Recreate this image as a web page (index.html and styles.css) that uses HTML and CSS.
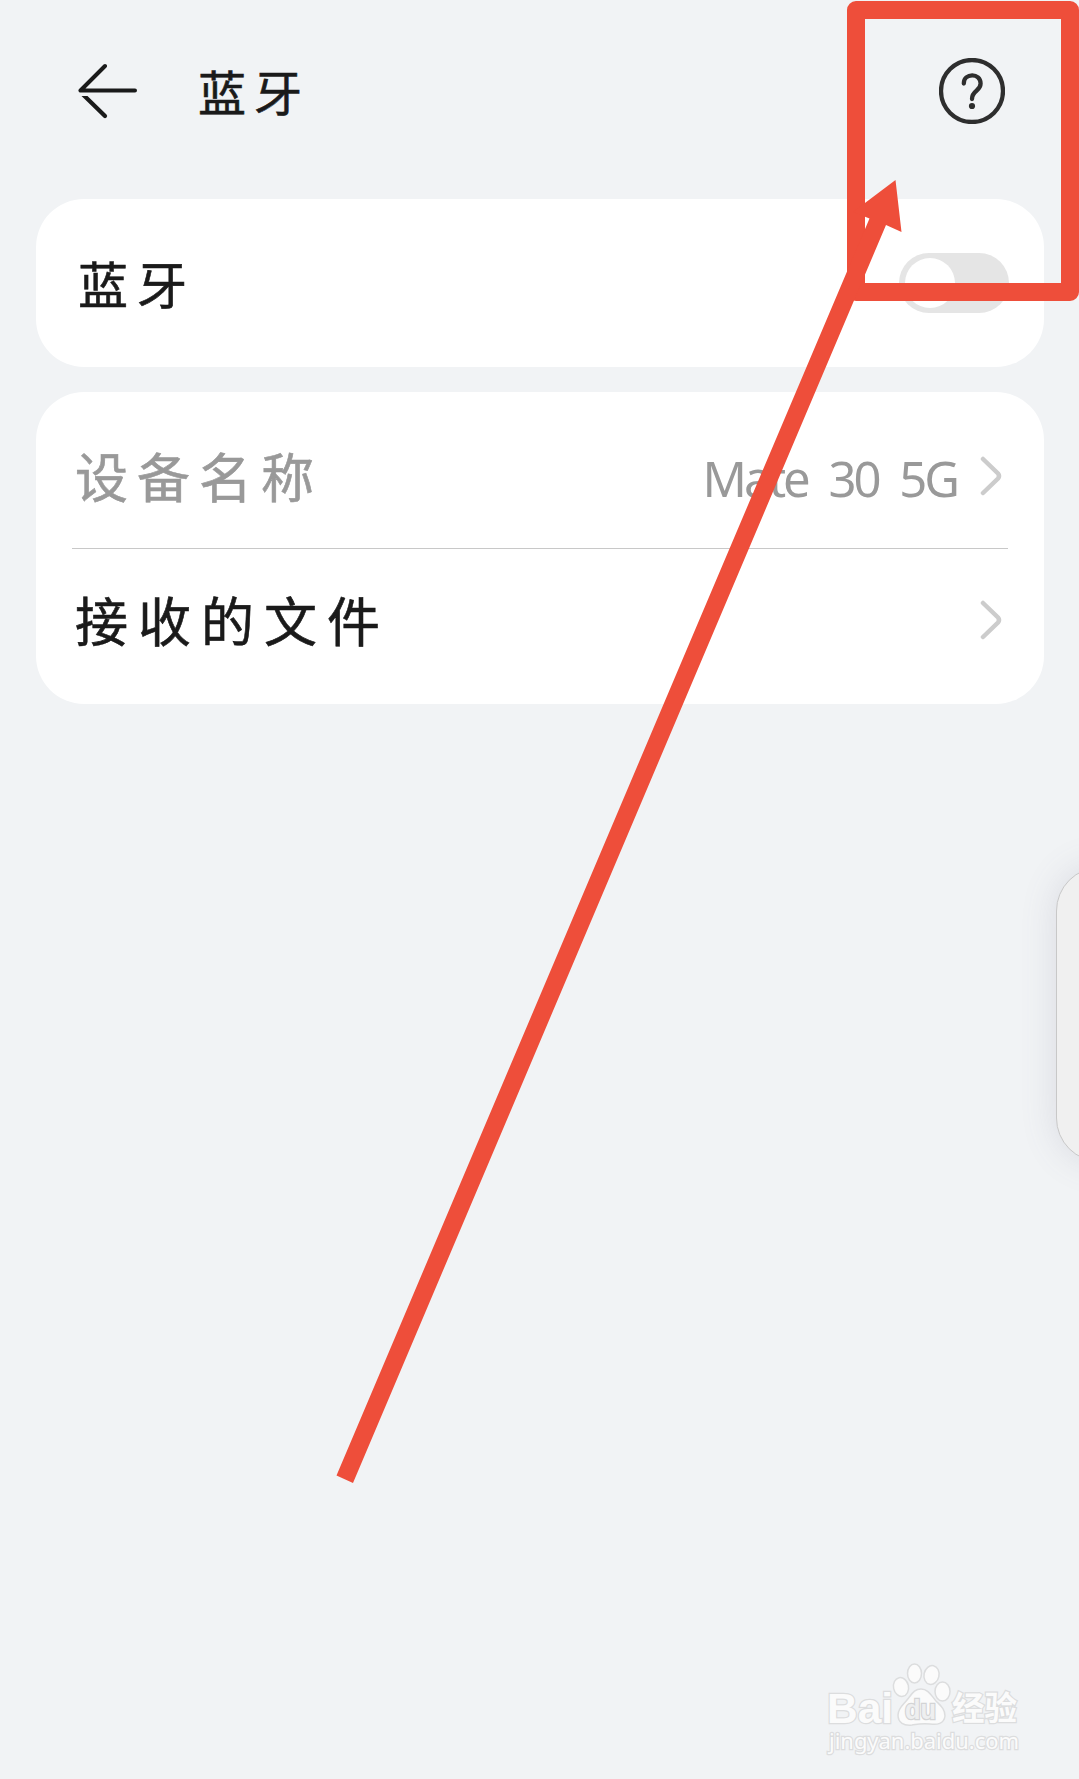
FILE: index.html
```
<!DOCTYPE html>
<html lang="zh-CN">
<head>
    <meta charset="UTF-8">
    <meta name="viewport" content="width=device-width, initial-scale=1.0">
    <title>蓝牙</title>
    <link rel="stylesheet" href="styles.css">
</head>
<body>

<header class="header">
    <svg class="back-icon" width="60" height="60" viewBox="0 0 60 60">
        <path d="M27 5 L2.500 29.500 H57" />
        <path class="cut" d="M3.500 35 H9.500 L28.500 53.500 A2 2 0 0 1 25.500 56.500 Z" />
    </svg>
    <h1>蓝牙</h1>
    <svg class="help-icon" width="66" height="66" viewBox="0 0 66 66">
        <circle cx="33" cy="33" r="31" />
        <path d="M24.800 25.500 C24.800 14.800 41.600 14.600 41.600 25.500 C41.600 33.500 33 32 33 41" />
        <circle class="dot" cx="33" cy="48" r="3.100" />
    </svg>
</header>

<div class="card switch-card">
    <span class="label">蓝牙</span>
    <div class="toggle"><div class="knob"></div></div>
</div>

<div class="card list-card">
    <div class="row disabled">
        <span class="label name">设备名称</span>
        <span class="value">Mate 30 5G</span>
        <svg class="chevron" width="22" height="40" viewBox="0 0 22 40">
            <path d="M3 3 L18 17.500 Q20 20 18 22.500 L3 37" />
        </svg>
    </div>
    <div class="divider"></div>
    <div class="row last">
        <span class="label files">接收的文件</span>
        <svg class="chevron" width="22" height="40" viewBox="0 0 22 40">
            <path d="M3 3 L18 17.500 Q20 20 18 22.500 L3 37" />
        </svg>
    </div>
</div>

<div class="side-panel"></div>

<!-- watermark -->
<svg class="watermark" width="230" height="130" viewBox="0 0 230 130">
    <text class="logo" x="17" y="83" font-size="43" textLength="66" lengthAdjust="spacingAndGlyphs">Bai</text>
    <ellipse cx="91" cy="47" rx="7.500" ry="9.500" transform="rotate(-12 91 47)" />
    <ellipse cx="104.500" cy="33.500" rx="7" ry="9.500" />
    <ellipse cx="121.500" cy="35" rx="7.500" ry="9.500" transform="rotate(12 121.500 35)" />
    <ellipse cx="132.500" cy="51.500" rx="7.500" ry="9.500" />
    <path d="M111 49 C118 49 121 55 126 61 C131 66 135 69 135 76 C134 84 127 85 120 84 C113 83 108 84 102 85 C94 86 88 83 88 75 C88 68 93 65 97 60 C102 54 104 49 111 49 Z" />
    <text class="logo du" x="95" y="79" font-size="27" textLength="31" lengthAdjust="spacingAndGlyphs">du</text>
    <text class="logo cjk" x="142" y="80" font-size="33" textLength="65" lengthAdjust="spacingAndGlyphs">经验</text>
    <text class="url" x="19" y="109" font-size="22" textLength="190" lengthAdjust="spacingAndGlyphs">jingyan.baidu.com</text>
</svg>

<!-- red box and arrow pointing at the help button -->
<div class="mark-box"></div>
<svg class="mark-arrow" width="1079" height="1779" viewBox="0 0 1079 1779">
    <polygon points="336.500,1475.500 869.500,218.500 853,212 895.500,180 901.500,232 886,225 353,1483" />
</svg>

</body>
</html>
```
FILE: styles.css
```
* {
    box-sizing: border-box;
}
body {
    position: relative;
    margin: 0;
    padding: 0 35px 0 36px;
    height: 1779px;
    overflow: hidden;
    background-color: #f1f3f5;
    color: #1a1a1a;
    font-family: "Noto Sans CJK SC", sans-serif;
}
svg {
    display: block;
}
.header {
    display: flex;
    align-items: center;
    height: 199px;
    padding: 0 39px 17px 42px;
}
.back-icon {
    fill: none;
    stroke: #1a1a1a;
    stroke-width: 4;
    stroke-linecap: round;
    stroke-linejoin: round;
}
.back-icon .cut {
    fill: #1a1a1a;
    stroke: none;
}
h1 {
    margin: 0 auto 0 60px;
    padding-bottom: 3px;
    font-size: 48px;
    font-weight: normal;
    line-height: 70px;
    letter-spacing: 8px;
    -webkit-text-stroke: 0.6px;
}
.help-icon {
    fill: none;
    stroke: #2e2e2e;
    stroke-width: 4.3px;
    stroke-linecap: round;
}
.help-icon .dot {
    fill: #2e2e2e;
    stroke: none;
}
.card {
    background-color: #fff;
    border-radius: 48px;
}
.switch-card {
    display: flex;
    align-items: center;
    justify-content: space-between;
    height: 168px;
    margin-bottom: 25px;
    padding: 0 35px 0 42px;
}
.label {
    padding-bottom: 2px;
    font-size: 50px;
    line-height: 76px;
    letter-spacing: 9px;
    -webkit-text-stroke: 0.6px;
}
.toggle {
    width: 110px;
    height: 60px;
    padding: 5px 6px;
    border-radius: 30px;
    background-color: #e5e5e5;
}
.knob {
    width: 50px;
    height: 50px;
    border-radius: 50%;
    background-color: #fff;
}
.list-card {
    height: 312px;
    padding: 12px 36px;
}
.row {
    display: flex;
    align-items: center;
    height: 144px;
    padding: 0 6px 0 3px;
}
.last {
    height: 142px;
}
.name {
    font-size: 53px;
}
.files {
    font-size: 53px;
    letter-spacing: 10px;
}
.disabled {
    color: #999;
}
.value {
    margin-left: auto;
    margin-right: 23px;
    padding-top: 3px;
    font-family: "Noto Sans", sans-serif;
    font-size: 49px;
    word-spacing: 11px;
    letter-spacing: -3px;
}
.files + .chevron {
    margin-left: auto;
}
.chevron {
    fill: none;
    stroke: #ccc;
    stroke-width: 4.5px;
    stroke-linecap: round;
}
.divider {
    height: 1px;
    background-color: #c8c8c8;
}
/* floating panel, mostly off the right edge */
.side-panel {
    position: absolute;
    left: 1056px;
    top: 867px;
    width: 100px;
    height: 295px;
    border: 1px solid #c8c8c8;
    border-radius: 44px;
    background-color: #f0f0f0;
    box-shadow: 0 0 36px rgba(100, 100, 130, 0.16);
}
.watermark {
    position: absolute;
    left: 810px;
    top: 1640px;
    fill: #fbfbfb;
    stroke: #dcddde;
    stroke-width: 1.5px;
}
.watermark text {
    paint-order: stroke;
    stroke-width: 2.5px;
}
.logo {
    font-family: "Liberation Sans", sans-serif;
    font-weight: bold;
}
.watermark .du {
    fill: #eeeff0;
    stroke: #d3d4d5;
}
.cjk {
    font-family: "Noto Sans CJK SC", sans-serif;
}
.url {
    font-family: "Noto Sans", sans-serif;
}
.mark-box {
    position: absolute;
    left: 847px;
    top: 1px;
    width: 232px;
    height: 300px;
    border: 18px solid #ee4e3a;
    border-radius: 9px;
}
.mark-arrow {
    position: absolute;
    left: 0;
    top: 0;
    fill: #ee4e3a;
}
```
